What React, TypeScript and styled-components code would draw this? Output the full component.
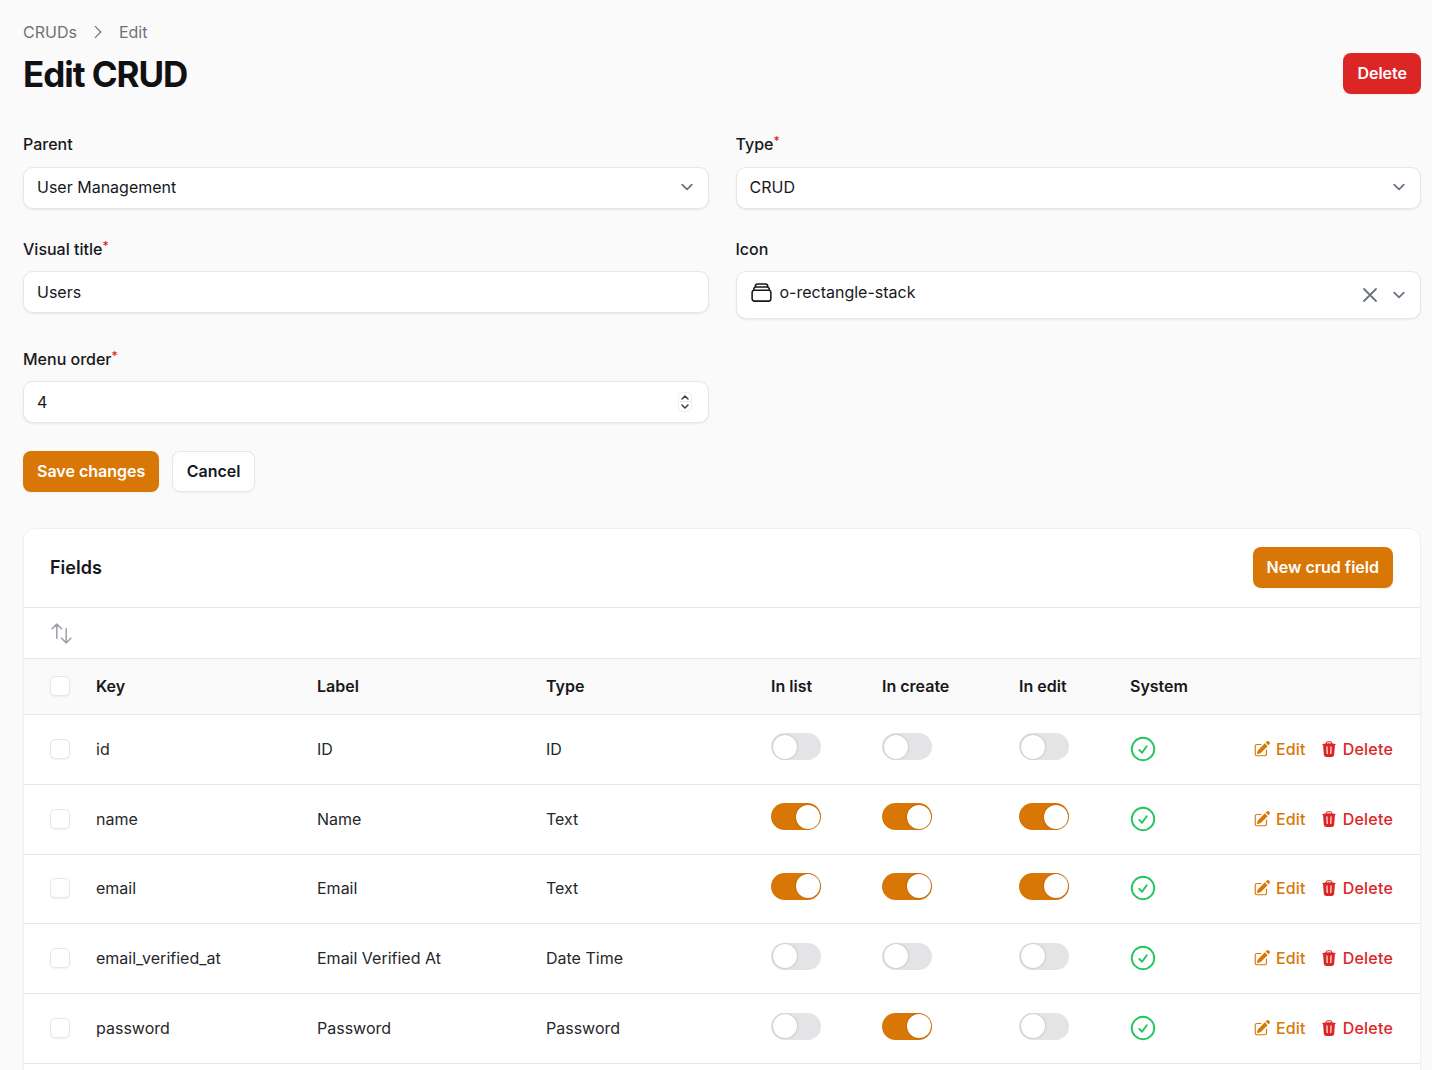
import styled, { createGlobalStyle } from 'styled-components';

const GlobalStyle = createGlobalStyle`
  html, body {
    margin: 0;
    height: 100%;
    overflow: hidden;
    background: #fafafa;
    color: #18181b;
    font-family: Inter, "Liberation Sans", sans-serif;
    font-size: 16px;
    line-height: 24px;
  }

  * {
    box-sizing: border-box;
  }
`;

const Page = styled.div`
  padding: 20px 11px 0 23px;
`;

const Header = styled.header`
  display: flex;
  justify-content: space-between;
  align-items: flex-end;
`;

const Breadcrumb = styled.nav`
  display: flex;
  align-items: center;
  gap: 12px;
  color: #71717a;
`;

const Title = styled.h1`
  margin: 10px 0 0;
  font-size: 35px;
  line-height: 40px;
  font-weight: 700;
  letter-spacing: -1.05px;
  color: #111113;
`;

const Button = styled.button<{ $variant: 'primary' | 'danger' | 'plain' }>`
  height: 41px;
  padding: ${(p) => (p.$variant === 'plain' ? '0 13.5px 1px' : '0 13px 1px')};
  border-radius: 8px;
  border: 1px solid ${(p) => (p.$variant === 'plain' ? '#e5e7eb' : 'transparent')};
  background: ${(p) =>
    p.$variant === 'primary' ? '#d97706' : p.$variant === 'danger' ? '#dc2626' : '#ffffff'};
  color: ${(p) => (p.$variant === 'plain' ? '#18181b' : '#ffffff')};
  font: 600 16px/24px Inter, "Liberation Sans", sans-serif;
  box-shadow: 0 1px 2px rgba(0, 0, 0, 0.05);
`;

const FormGrid = styled.div`
  display: grid;
  grid-template-columns: 1fr 1fr;
  column-gap: 27px;
  row-gap: 28px;
  margin-top: 38.2px;
  align-items: start;
`;

const Field = styled.div`
  display: flex;
  flex-direction: column;
  gap: 10.4px;
`;

const Label = styled.label`
  font-weight: 500;
  color: #18181b;
`;

const Required = styled.sup`
  color: #dc2626;
  font-size: 12px;
  line-height: 0;
  vertical-align: 5px;
`;

const Control = styled.div<{ $tall?: boolean }>`
  display: flex;
  align-items: ${(p) => (p.$tall ? 'flex-start' : 'center')};
  height: ${(p) => (p.$tall ? '48px' : '42px')};
  padding: ${(p) => (p.$tall ? '8px 9px 0 13px' : '0 9px 0.8px 13px')};
  background: #ffffff;
  border: 1px solid #e5e7eb;
  border-radius: 10px;
  box-shadow: 0 1px 2px rgba(0, 0, 0, 0.08);
`;

const Value = styled.span`
  flex: 1;
  color: #18181b;
`;

const IconValue = styled.span`
  display: flex;
  flex: 1;
  align-items: center;
  gap: 6px;
  margin-left: -1px;
`;

const ControlActions = styled.span`
  display: flex;
  align-items: center;
  gap: 5px;
  margin-top: 3px;
  color: #6b7280;
`;

const Spinner = styled.span`
  display: flex;
  flex-direction: column;
  width: 14px;
  height: 20px;
  margin-right: 7px;
  border: 1px solid #f0f0f0;
  border-radius: 4px;
  color: #374151;
`;

const SpinPart = styled.span<{ $bottom?: boolean }>`
  display: flex;
  flex: 1;
  align-items: center;
  justify-content: center;
  border-top: ${(p) => (p.$bottom ? '1px solid #e5e7eb' : 'none')};
`;

const FormActions = styled.div`
  display: flex;
  gap: 13px;
  margin-top: 28px;
`;

const Card = styled.section`
  margin-top: 35.6px;
  padding-bottom: 60px;
  background: #ffffff;
  border: 1px solid #f0f0f1;
  border-radius: 12px;
  box-shadow: 0 1px 2px rgba(0, 0, 0, 0.03);
`;

const CardHeader = styled.div`
  display: flex;
  justify-content: space-between;
  align-items: center;
  height: 79px;
  padding: 0 27px 1px 26px;
  border-bottom: 1px solid #e5e7eb;
`;

const CardTitle = styled.h2`
  margin: 1px 0 0;
  font-size: 18px;
  line-height: 28px;
  font-weight: 600;
`;

const Toolbar = styled.div`
  display: flex;
  align-items: center;
  height: 51px;
  padding: 2px 0 0 25px;
  color: #9ca3af;
  border-bottom: 1px solid #e5e7eb;
`;

const Table = styled.table`
  width: 100%;
  table-layout: fixed;
  border-spacing: 0;
`;

const Th = styled.th`
  height: 56px;
  padding: 0;
  text-align: left;
  font-weight: 600;
  background: #fafafa;
  border-bottom: 1px solid #e5e7eb;
`;

const Td = styled.td`
  height: 69.8px;
  padding: 0 0 1px;
  color: #27272a;
  border-bottom: 1px solid #e5e7eb;
`;

const Checkbox = styled.span`
  display: block;
  width: 20px;
  height: 20px;
  margin-left: 26px;
  background: #ffffff;
  border: 1px solid #e5e7eb;
  border-radius: 5px;
  box-shadow: 0 1px 2px rgba(0, 0, 0, 0.06);
`;

const Toggle = styled.span<{ $on: boolean }>`
  display: flex;
  justify-content: ${(p) => (p.$on ? 'flex-end' : 'flex-start')};
  align-items: center;
  width: 50px;
  height: 27px;
  margin-bottom: 4px;
  padding: 1.5px;
  background: ${(p) => (p.$on ? '#d97706' : '#e4e4e7')};
  border-radius: 14px;
`;

const Knob = styled.span`
  display: block;
  width: 24px;
  height: 24px;
  background: #ffffff;
  border-radius: 50%;
  box-shadow: 0 0 2px rgba(0, 0, 0, 0.3);
`;

const SystemMark = styled.span`
  display: flex;
  margin-left: -2px;
  color: #22c55e;
`;

const Actions = styled.div`
  display: flex;
  justify-content: flex-end;
  gap: 14px;
  padding-right: 27px;
`;

const ActionLink = styled.a<{ $danger?: boolean }>`
  display: flex;
  align-items: center;
  gap: 5px;
  font-weight: 500;
  letter-spacing: 0.2px;
  color: ${(p) => (p.$danger ? '#dc2626' : '#d97706')};
`;

const ChevronDown = () => (
  <svg width="24" height="24" viewBox="0 0 20 20" fill="none" stroke="#6b7280" strokeWidth="1.5" strokeLinecap="round" strokeLinejoin="round">
    <path d="m6 8 4 4 4-4" />
  </svg>
);

const CrumbArrow = () => (
  <svg width="18" height="18" viewBox="0 0 24 24" fill="none" stroke="#71717a" strokeWidth="1.5" strokeLinecap="round" strokeLinejoin="round">
    <path d="M8.25 4.5l7.5 7.5-7.5 7.5" />
  </svg>
);

const XMark = () => (
  <svg width="24" height="24" viewBox="0 0 24 24" fill="none" stroke="#6b7280" strokeWidth="1.8" strokeLinecap="round" strokeLinejoin="round">
    <path d="M6 18L18 6M6 6l12 12" />
  </svg>
);

const RectangleStack = () => (
  <svg width="25" height="25" viewBox="0 0 24 24" fill="none" stroke="#18181b" strokeWidth="1.5" strokeLinecap="round" strokeLinejoin="round">
    <path d="M6 6.878V6a2.25 2.25 0 012.25-2.25h7.5A2.25 2.25 0 0118 6v.878m-12 0c.235-.083.487-.128.75-.128h10.5c.263 0 .515.045.75.128m-12 0A2.25 2.25 0 004.5 9v.878m13.5-3A2.25 2.25 0 0119.5 9v.878m0 0a2.246 2.246 0 00-.75-.128H5.25c-.263 0-.515.045-.75.128m15 0A2.25 2.25 0 0121 12v6a2.25 2.25 0 01-2.25 2.25H5.25A2.25 2.25 0 013 18v-6c0-.98.626-1.813 1.5-2.122" />
  </svg>
);

const SpinArrow = ({ down }: { down?: boolean }) => (
  <svg width="10" height="7" viewBox="0 0 10 7" fill="none" stroke="currentColor" strokeWidth="1.5" strokeLinecap="round" strokeLinejoin="round">
    <path d={down ? 'M2 2l3 3 3-3' : 'M2 5l3-3 3 3'} />
  </svg>
);

const ArrowsUpDown = () => (
  <svg width="25" height="25" viewBox="0 0 24 24" fill="none" stroke="currentColor" strokeWidth="1.5" strokeLinecap="round" strokeLinejoin="round">
    <path d="M3 7.5L7.5 3m0 0L12 7.5M7.5 3v13.5m13.5 0L16.5 21m0 0L12 16.5m4.5 4.5V7.5" />
  </svg>
);

const CheckCircle = () => (
  <svg width="30" height="30" viewBox="0 0 24 24" fill="none" stroke="currentColor" strokeWidth="1.5" strokeLinecap="round" strokeLinejoin="round">
    <path d="M9 12.75L11.25 15 15 9.75M21 12a9 9 0 11-18 0 9 9 0 0118 0z" />
  </svg>
);

const PencilSquare = () => (
  <svg width="18" height="18" viewBox="0 0 24 24" fill="currentColor">
    <path d="M21.731 2.269a2.625 2.625 0 00-3.712 0l-1.157 1.157 3.712 3.712 1.157-1.157a2.625 2.625 0 000-3.712zM19.513 8.199l-3.712-3.712-8.4 8.4a5.25 5.25 0 00-1.32 2.214l-.8 2.685a.75.75 0 00.933.933l2.685-.8a5.25 5.25 0 002.214-1.32l8.4-8.4z" />
    <path d="M5.25 5.25a3 3 0 00-3 3v10.5a3 3 0 003 3h10.5a3 3 0 003-3V13.5a.75.75 0 00-1.5 0v5.25a1.5 1.5 0 01-1.5 1.5H5.25a1.5 1.5 0 01-1.5-1.5V8.25a1.5 1.5 0 011.5-1.5h5.25a.75.75 0 000-1.5H5.25z" />
  </svg>
);

const Trash = () => (
  <svg width="18" height="18" viewBox="0 0 24 24" fill="currentColor">
    <path
      fillRule="evenodd"
      clipRule="evenodd"
      d="M16.5 4.478v.227a48.816 48.816 0 013.878.512.75.75 0 11-.256 1.478l-.209-.035-1.005 13.07a3 3 0 01-2.991 2.77H8.084a3 3 0 01-2.991-2.77L4.087 6.66l-.209.035a.75.75 0 01-.256-1.478A48.567 48.567 0 017.5 4.705v-.227c0-1.564 1.213-2.9 2.816-2.951a52.662 52.662 0 013.369 0c1.603.051 2.815 1.387 2.815 2.951zm-6.136-1.452a51.196 51.196 0 013.273 0C14.39 3.05 15 3.684 15 4.478v.113a49.488 49.488 0 00-6 0v-.113c0-.794.609-1.428 1.364-1.452zm-.355 5.945a.75.75 0 10-1.5.058l.347 9a.75.75 0 101.499-.058l-.346-9zm5.48.058a.75.75 0 10-1.498-.058l-.347 9a.75.75 0 001.5.058l.345-9z"
    />
  </svg>
);

const columns = [
  { label: '', width: 72 },
  { label: 'Key', width: 221 },
  { label: 'Label', width: 229 },
  { label: 'Type', width: 225 },
  { label: 'In list', width: 111 },
  { label: 'In create', width: 137 },
  { label: 'In edit', width: 111 },
  { label: 'System', width: 110 },
  { label: '', width: 180 },
];

const rows = [
  { key: 'id', label: 'ID', type: 'ID', list: false, create: false, edit: false },
  { key: 'name', label: 'Name', type: 'Text', list: true, create: true, edit: true },
  { key: 'email', label: 'Email', type: 'Text', list: true, create: true, edit: true },
  { key: 'email_verified_at', label: 'Email Verified At', type: 'Date Time', list: false, create: false, edit: false },
  { key: 'password', label: 'Password', type: 'Password', list: false, create: true, edit: false },
];

const App = (): JSX.Element => {
  return (
    <Page>
      <GlobalStyle />
      <Header>
        <div>
          <Breadcrumb>
            <span>CRUDs</span>
            <CrumbArrow />
            <span>Edit</span>
          </Breadcrumb>
          <Title>Edit CRUD</Title>
        </div>
        <Button $variant="danger">Delete</Button>
      </Header>

      <FormGrid>
        <Field>
          <Label>Parent</Label>
          <Control>
            <Value>User Management</Value>
            <ChevronDown />
          </Control>
        </Field>
        <Field>
          <Label>Type<Required>*</Required></Label>
          <Control>
            <Value>CRUD</Value>
            <ChevronDown />
          </Control>
        </Field>
        <Field>
          <Label>Visual title<Required>*</Required></Label>
          <Control>
            <Value>Users</Value>
          </Control>
        </Field>
        <Field>
          <Label>Icon</Label>
          <Control $tall>
            <IconValue>
              <RectangleStack />
              <span>o-rectangle-stack</span>
            </IconValue>
            <ControlActions>
              <XMark />
              <ChevronDown />
            </ControlActions>
          </Control>
        </Field>
        <Field>
          <Label>Menu order<Required>*</Required></Label>
          <Control>
            <Value>4</Value>
            <Spinner>
              <SpinPart><SpinArrow /></SpinPart>
              <SpinPart $bottom><SpinArrow down /></SpinPart>
            </Spinner>
          </Control>
        </Field>
      </FormGrid>

      <FormActions>
        <Button $variant="primary">Save changes</Button>
        <Button $variant="plain">Cancel</Button>
      </FormActions>

      <Card>
        <CardHeader>
          <CardTitle>Fields</CardTitle>
          <Button $variant="primary">New crud field</Button>
        </CardHeader>
        <Toolbar>
          <ArrowsUpDown />
        </Toolbar>
        <Table>
          <colgroup>
            {columns.map((col, i) => (
              <col key={i} width={col.width} />
            ))}
          </colgroup>
          <thead>
            <tr>
              <Th><Checkbox /></Th>
              {columns.slice(1).map((col, i) => (
                <Th key={i}>{col.label}</Th>
              ))}
            </tr>
          </thead>
          <tbody>
            {rows.map((row) => (
              <tr key={row.key}>
                <Td><Checkbox /></Td>
                <Td>{row.key}</Td>
                <Td>{row.label}</Td>
                <Td>{row.type}</Td>
                <Td><Toggle $on={row.list}><Knob /></Toggle></Td>
                <Td><Toggle $on={row.create}><Knob /></Toggle></Td>
                <Td><Toggle $on={row.edit}><Knob /></Toggle></Td>
                <Td><SystemMark><CheckCircle /></SystemMark></Td>
                <Td>
                  <Actions>
                    <ActionLink><PencilSquare />Edit</ActionLink>
                    <ActionLink $danger><Trash />Delete</ActionLink>
                  </Actions>
                </Td>
              </tr>
            ))}
          </tbody>
        </Table>
      </Card>
    </Page>
  );
};

export default App;
